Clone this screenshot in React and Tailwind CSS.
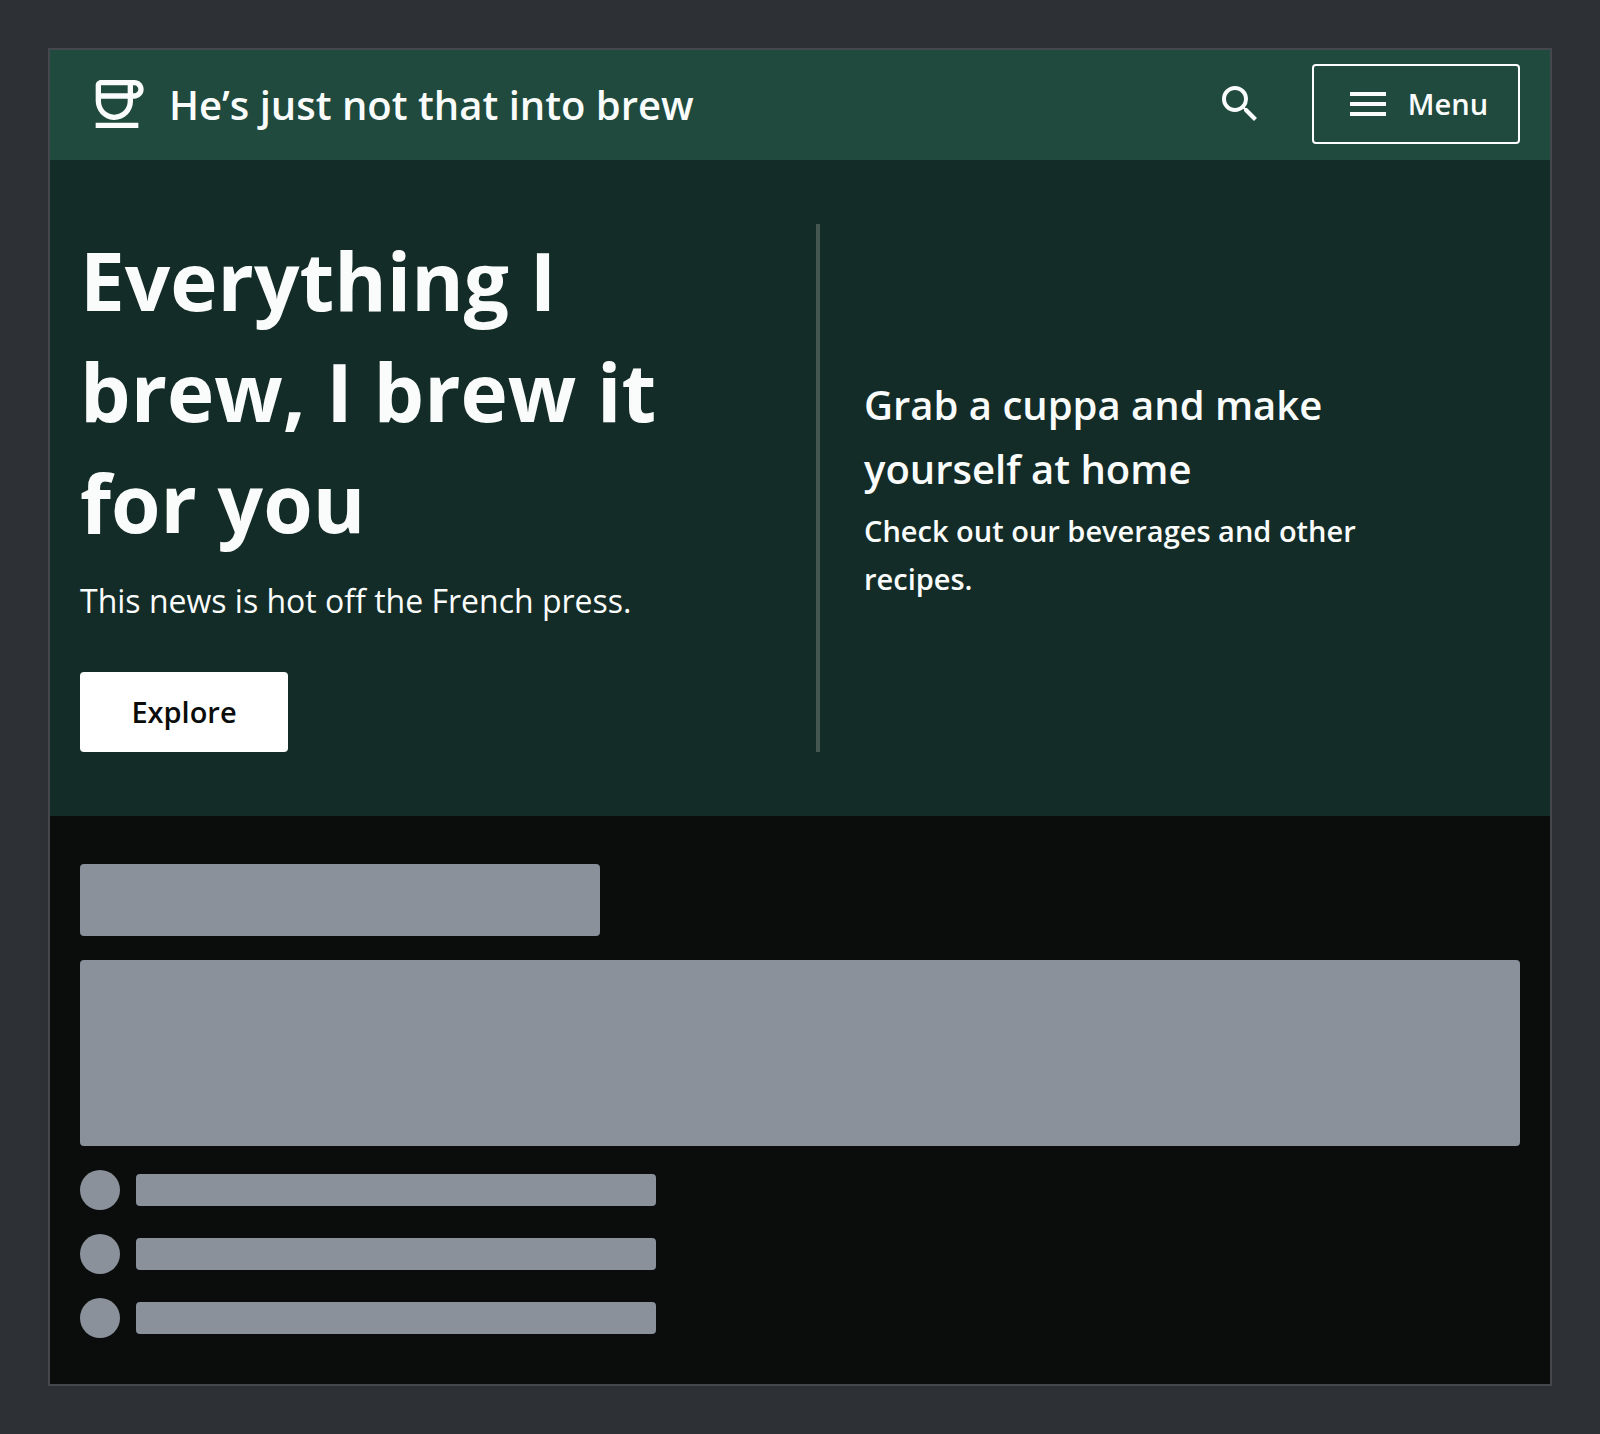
import { MdOutlineCoffee, MdSearch, MdMenu } from "react-icons/md";

function Header() {
  return (
    <header className="flex items-center justify-between bg-[#1f4a3d] pt-3.5 pr-[30px] pb-4 pl-[35px]">
      <div className="flex items-center gap-5">
        <MdOutlineCoffee className="size-16" aria-hidden="true" />
        <p className="pt-0.5 text-[40px] leading-[64px] font-semibold">He’s just not that into brew</p>
      </div>
      <div className="flex items-center gap-12">
        <button type="button" aria-label="Search">
          <MdSearch className="size-12" aria-hidden="true" />
        </button>
        <button
          type="button"
          className="flex h-20 w-52 items-center justify-center gap-4 rounded border-2 border-white text-[29px] leading-10 font-semibold"
        >
          <MdMenu className="size-12" aria-hidden="true" />
          Menu
        </button>
      </div>
    </header>
  );
}

function Hero() {
  return (
    <section className="grid grid-cols-2 gap-8 bg-[#142c27] px-[30px] py-16">
      <div className="flex flex-col items-start">
        <h1 className="max-w-[640px] text-[80px] leading-[111px] font-bold">
          Everything I brew, I brew it for you
        </h1>
        <p className="mt-5 text-[32px] leading-[48px]">This news is hot off the French press.</p>
        <button
          type="button"
          className="mt-[47px] h-20 w-52 rounded bg-white text-[29px] leading-10 font-semibold text-[#0a0d0b]"
        >
          Explore
        </button>
      </div>
      <div className="flex flex-col justify-center gap-1.5 border-l-4 border-[#435650] pr-24 pl-11">
        <h2 className="max-w-[560px] text-[40px] leading-[64px] font-semibold">
          Grab a cuppa and make yourself at home
        </h2>
        <p className="text-[29px] leading-[48px] font-semibold">
          Check out our beverages and other recipes.
        </p>
      </div>
    </section>
  );
}

function Placeholder() {
  return (
    <section aria-hidden="true" className="flex flex-col gap-6 px-[30px] pt-12 pb-[46px]">
      <div className="h-[72px] w-[520px] rounded bg-[#8a919b]" />
      <div className="h-[186px] rounded bg-[#8a919b]" />
      {[0, 1, 2].map((row) => (
        <div key={row} className="flex items-center gap-4">
          <div className="size-10 rounded-full bg-[#8a919b]" />
          <div className="h-8 w-[520px] rounded bg-[#8a919b]" />
        </div>
      ))}
    </section>
  );
}

export default function App() {
  return (
    <div className="min-h-screen bg-[#2d3035] p-12 font-['Open_Sans',sans-serif] text-[#fafcfb]">
      <main className="border-2 border-[#44474e] bg-[#0a0d0b]">
        <Header />
        <Hero />
        <Placeholder />
      </main>
    </div>
  );
}
